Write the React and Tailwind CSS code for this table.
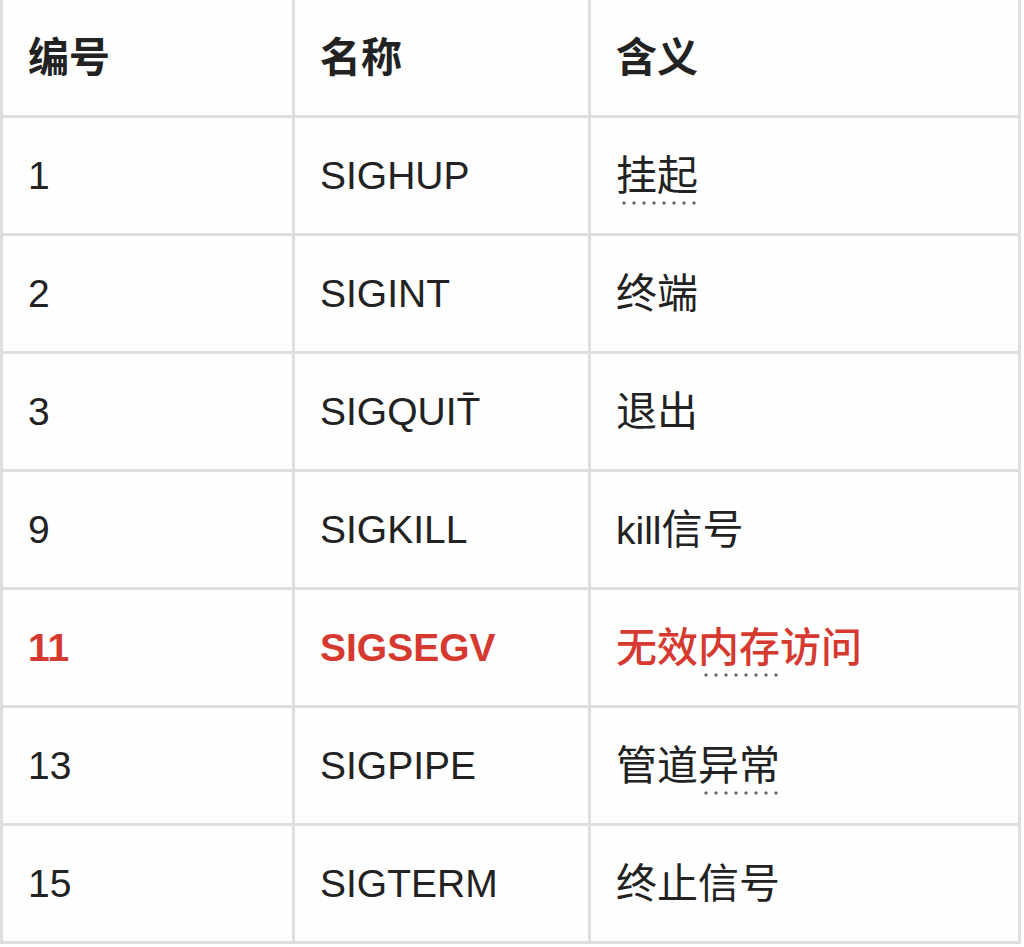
import React from "react";

const rows = [
  { no: "1", name: "SIGHUP", meaning: [{ t: "挂起", dot: true }] },
  { no: "2", name: "SIGINT", meaning: [{ t: "终端" }] },
  { no: "3", name: "SIGQUIT\u0304", meaning: [{ t: "退出" }] },
  { no: "9", name: "SIGKILL", meaning: [{ t: "kill", latin: true }, { t: "信号" }] },
  { no: "11", name: "SIGSEGV", meaning: [{ t: "无效" }, { t: "内存", dot: true }, { t: "访问" }], red: true },
  { no: "13", name: "SIGPIPE", meaning: [{ t: "管道" }, { t: "异常", dot: true }] },
  { no: "15", name: "SIGTERM", meaning: [{ t: "终止信号" }] },
];

const Dotted = ({ children }) => (
  <span className="relative">
    {children}
    <span className="absolute left-[3px] right-[2px] bottom-[-7px] h-[4px] bg-[radial-gradient(circle,#666_1.3px,transparent_1.9px)] bg-[length:10px_4px]" />
  </span>
);

const Meaning = ({ parts }) => (
  <>
    {parts.map((p, i) => {
      const cls = p.latin ? "text-[39px]" : "text-[41px]";
      const content = <span className={cls}>{p.t}</span>;
      return p.dot ? <Dotted key={i}>{content}</Dotted> : <React.Fragment key={i}>{content}</React.Fragment>;
    })}
  </>
);

export default function App() {
  const cell = "bg-[#fefefe] flex items-center pl-[25px] pt-[2px]";
  return (
    <div
      className="w-[1024px] h-[947px] bg-white"
      style={{ fontFamily: '"Liberation Sans", "Noto Sans CJK SC", sans-serif' }}
    >
      <div className="w-[1021px] grid grid-cols-[289px_293px_427px] auto-rows-[115px] gap-[3px] bg-[#dedede] px-[3px] pb-[3px] text-[#222] text-[39px]">
        <div className={cell + " font-bold text-[41px]"}>编号</div>
        <div className={cell + " font-bold text-[41px]"}>名称</div>
        <div className={cell + " font-bold text-[41px]"}>含义</div>
        {rows.map((r) => (
          <React.Fragment key={r.no}>
            <div className={cell + (r.red ? " font-bold text-[#d6392f]" : "")}>{r.no}</div>
            <div className={cell + (r.red ? " font-bold text-[#d6392f]" : "")}>{r.name}</div>
            <div className={cell + (r.red ? " font-medium text-[#d6392f]" : "")}>
              <span className="leading-none">
                <Meaning parts={r.meaning} />
              </span>
            </div>
          </React.Fragment>
        ))}
      </div>
    </div>
  );
}
